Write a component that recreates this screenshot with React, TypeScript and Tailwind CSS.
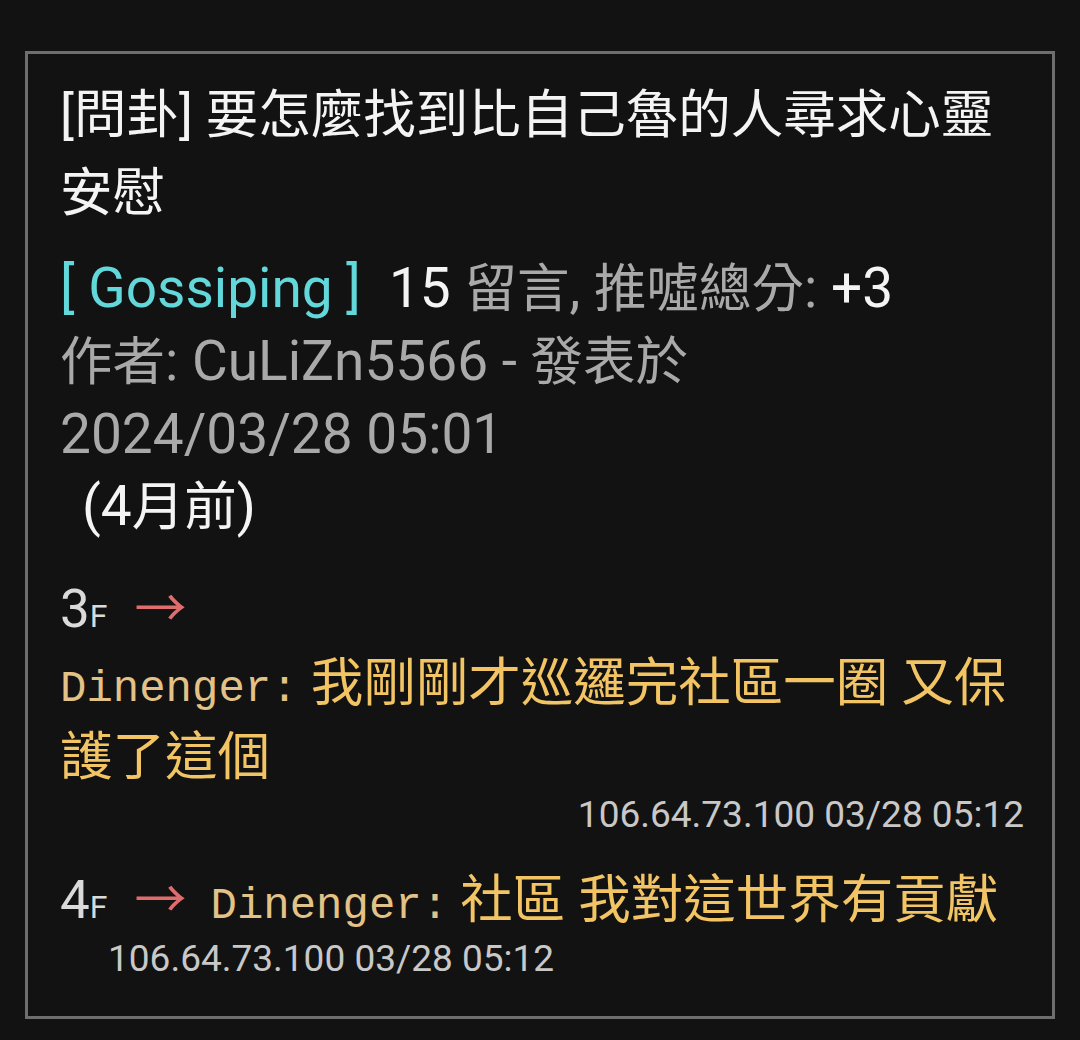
const cjk = "text-[52.5px]";

export default function App() {
  return (
    <div className="min-h-[1040px] w-[1080px] bg-[#121212] pt-[51px] pl-[25px] font-['Roboto','Noto_Sans_CJK_TC',sans-serif]">
      <div className="h-[968px] w-[1030px] border-[3px] border-[#6e6e6e] pl-[32px] pr-[28px] pt-[22px]">
        <h1 className="text-[52.5px] leading-[78px] font-normal text-[#f4f4f4]">
          [問卦] 要怎麼找到比自己魯的人尋求心靈安慰
        </h1>
        <div className="mt-[20px] text-[55px] leading-[72px]">
          <div>
            <span className="text-[#63d8db]">[ Gossiping ]</span>
            <span className="ml-[28px] text-[#f4f4f4]">15</span>{" "}
            <span className="text-[#a9a9a9]">
              <span className={cjk}>留言</span>, <span className={cjk}>推噓總分</span>:{" "}
            </span>
            <span className="text-[#f4f4f4]">+3</span>
          </div>
          <div className="text-[#a9a9a9]">
            <span className={cjk}>作者</span>: CuLiZn5566 - <span className={cjk}>發表於</span>
          </div>
          <div className="text-[#a9a9a9]">2024/03/28 05:01</div>
          <div className="pl-[22px] text-[#f4f4f4]">
            (4<span className={cjk}>月前</span>)
          </div>
        </div>

        <div className="mt-[28px]">
          <div className="flex items-baseline text-[#dadada]">
            <span className="text-[53px] leading-[72px]">3</span>
            <span className="text-[32px]">F</span>
            <span className="ml-[27px] text-[52px] text-[#e06d6d]">→</span>
          </div>
          <div className="text-[52.5px] leading-[68px] text-[#f2c463]">
            <span className="font-['Liberation_Mono',monospace] text-[44px] text-[#e2c286]">Dinenger:</span>{" "}
            我剛剛才巡邏完社區一圈 又保護了這個
          </div>
          <div className="text-right text-[37px] leading-[48px] text-[#c8c8c8]">106.64.73.100 03/28 05:12</div>
        </div>

        <div className="mt-[22px]">
          <div className="flex items-baseline">
            <span className="text-[53px] leading-[72px] text-[#dadada]">4</span>
            <span className="text-[32px] text-[#dadada]">F</span>
            <span className="ml-[27px] text-[52px] text-[#e06d6d]">→</span>
            <span className="ml-[24px] font-['Liberation_Mono',monospace] text-[44px] text-[#e2c286]">Dinenger:</span>
            <span className="ml-[12px] text-[52.5px] text-[#f2c463]">社區 我對這世界有貢獻</span>
          </div>
          <div className="pl-[48px] text-[37px] leading-[38px] text-[#c8c8c8]">106.64.73.100 03/28 05:12</div>
        </div>
      </div>
    </div>
  );
}
